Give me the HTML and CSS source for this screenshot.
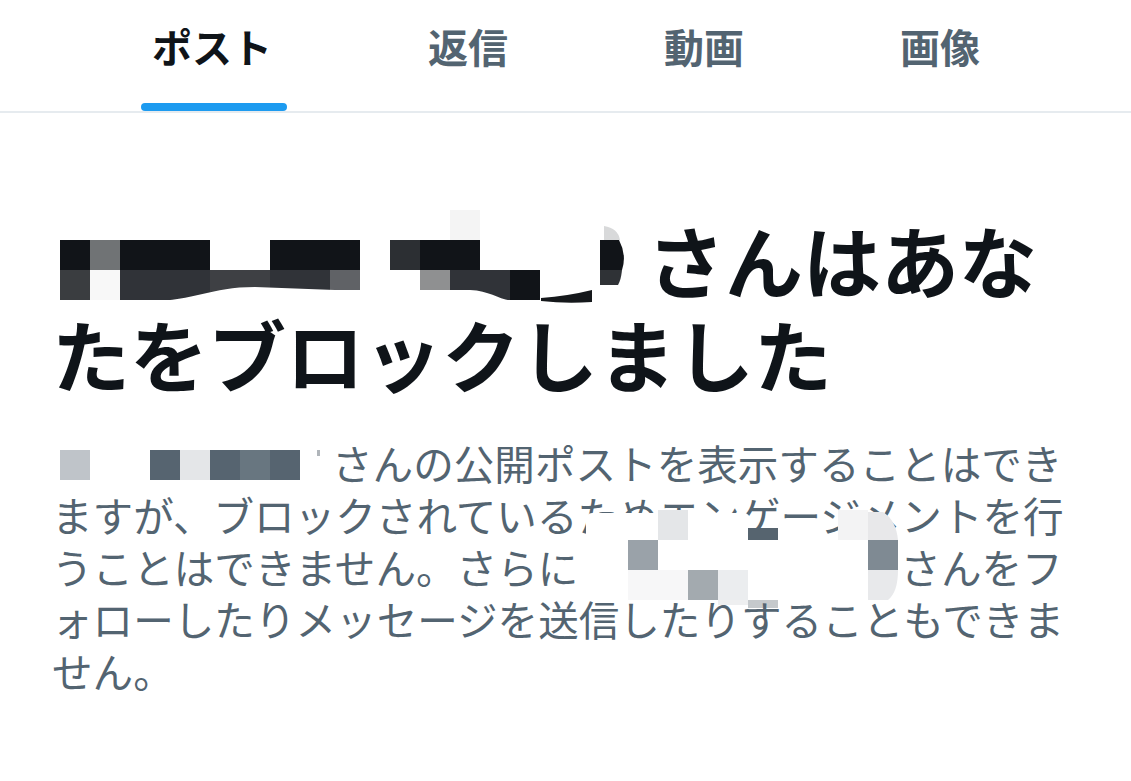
FILE: index.html
```html
<!DOCTYPE html>
<html lang="ja">
<head>
<meta charset="utf-8">
<title>ブロックされています</title>
<link rel="stylesheet" href="styles.css">
</head>
<body>
<nav class="tabs">
  <div class="tab active">ポスト</div>
  <div class="tab">返信</div>
  <div class="tab">動画</div>
  <div class="tab">画像</div>
</nav>
<main class="content">
  <h1 class="title"><svg class="mask" width="595" height="94" viewBox="52 212 595 94" aria-hidden="true"><rect x="450" y="210" width="30" height="30" fill="#f4f4f4"/><rect x="60" y="240" width="30" height="30" fill="#111418"/><rect x="90" y="240" width="30" height="30" fill="#707375"/><rect x="120" y="240" width="90" height="30" fill="#111418"/><rect x="270" y="240" width="90" height="30" fill="#111418"/><rect x="390" y="240" width="30" height="30" fill="#2c2f33"/><rect x="420" y="240" width="60" height="30" fill="#111418"/><rect x="60" y="270" width="30" height="30" fill="#3a3d40"/><rect x="90" y="270" width="30" height="30" fill="#f8f8f8"/><rect x="120" y="270" width="90" height="30" fill="#303338"/><rect x="210" y="270" width="60" height="30" fill="#3e4044"/><rect x="270" y="270" width="60" height="30" fill="#303338"/><rect x="330" y="270" width="30" height="30" fill="#606266"/><rect x="420" y="270" width="30" height="30" fill="#8f9091"/><rect x="450" y="270" width="60" height="30" fill="#303338"/><rect x="510" y="270" width="30" height="30" fill="#111418"/><path d="M150 301 C195 301 210 287 255 287 L335 290 L470 290 C492 291 500 301 516 301 Z" fill="#ffffff"/><path d="M541 298 Q568 296 592 290 L592 302 Q566 304 541 301 Z" fill="#15181b"/><path d="M600 240 L619 240 Q627 255 622 270 L600 270 Z" fill="#111418"/><path d="M600 270 L622 270 Q621 280 618 285 L600 285 Z" fill="#2f3236"/><path d="M604 226 Q618 228 620 240 L604 240 Z" fill="#d8d9da"/></svg>さんはあなたをブロックしました</h1>
  <p class="desc"><svg class="mask" width="280" height="52" viewBox="52 437 280 52" aria-hidden="true"><rect x="60" y="450" width="30" height="30" fill="#bfc4c9"/><rect x="150" y="450" width="30" height="30" fill="#566470"/><rect x="180" y="450" width="30" height="30" fill="#e4e6e8"/><rect x="210" y="450" width="30" height="30" fill="#566470"/><rect x="240" y="450" width="30" height="30" fill="#687680"/><rect x="270" y="450" width="30" height="30" fill="#566470"/><rect x="317" y="450" width="3" height="6" fill="#b0b5ba"/></svg>さんの公開ポストを表示することはできますが、ブロックされているためエンゲージメントを行うことはできません。さらに<svg class="mask" width="322" height="52" viewBox="580 541 322 52" aria-hidden="true"><rect x="588" y="513" width="164" height="27" rx="6" fill="#ffffff"/><rect x="660" y="510" width="30" height="30" fill="#e4e6e8"/><rect x="750" y="528" width="30" height="12" fill="#56646f"/><rect x="840" y="510" width="30" height="30" fill="#f3f3f4"/><path d="M870 512 L885 512 Q898 520 900 540 L870 540 Z" fill="#e8e8ea"/><rect x="630" y="540" width="30" height="30" fill="#9aa2a9"/><path d="M870 540 L900 540 L900 570 L870 570 Z" fill="#7f8a93"/><rect x="630" y="570" width="60" height="30" fill="#f7f7f8"/><rect x="690" y="570" width="30" height="30" fill="#a3aaaf"/><rect x="720" y="570" width="30" height="30" fill="#ebedef"/><path d="M870 570 L900 570 Q900 592 890 600 L870 600 Z" fill="#e8e9eb"/><rect x="720" y="600" width="30" height="5" fill="#eeeff0"/><rect x="750" y="600" width="30" height="8" fill="#c5c9cc"/></svg>さんをフォローしたりメッセージを送信したりすることもできません。</p>
</main>
</body>
</html>
```

FILE: styles.css
```css
html, body {
  margin: 0;
  background: #ffffff;
}

body {
  font-family: "Noto Sans CJK JP", "Noto Sans", sans-serif;
}

.tabs {
  display: flex;
  height: 111px;
  padding-left: 74px;
  border-bottom: 2px solid #e6ebef;
}

.tab {
  position: relative;
  padding: 26px 78px 0;
  font-size: 40px;
  line-height: 40px;
  font-weight: 700;
  color: #536471;
  white-space: nowrap;
}

.tab.active {
  color: #0f1419;
}

.tab.active::after {
  content: "";
  position: absolute;
  left: 50%;
  bottom: 0;
  width: 146px;
  height: 8px;
  margin-left: -71px;
  border-radius: 4px;
  background: #1d9bf0;
}

.content {
  padding: 99px 49px 0 52px;
}

.title {
  margin: 0;
  font-size: 78px;
  line-height: 94px;
  font-weight: 700;
  color: #0f1419;
  line-break: normal;
}

.desc {
  margin: 37px 0 0;
  font-size: 40.6px;
  line-height: 52px;
  color: #536471;
  line-break: normal;
}

.mask {
  vertical-align: top;
  overflow: visible;
}
```
